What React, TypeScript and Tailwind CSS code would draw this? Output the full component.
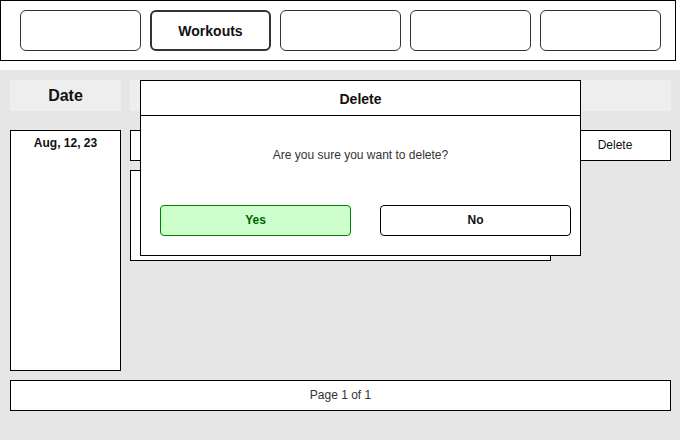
import React from "react";

export default function App() {
  const navItems = ["", "Workouts", "", "", ""];
  return (
    <div
      className="relative w-[681px] h-[441px] bg-white overflow-hidden"
      style={{ fontFamily: '"Liberation Sans", Arial, sans-serif' }}
    >
      {/* Top navigation */}
      <div className="flex items-start gap-[9px] w-[676px] h-[61px] border border-black pl-[19px] pt-[9px]">
        {navItems.map((label, i) => (
          <div
            key={i}
            className={
              label
                ? "w-[121px] h-[41px] rounded-[6px] border-2 border-[#333] flex items-center justify-center pt-[2px] text-[14px] font-bold text-[#111]"
                : "w-[121px] h-[41px] rounded-[6px] border border-[#333] flex items-center justify-center"
            }
          >
            {label}
          </div>
        ))}
      </div>

      {/* Gray content area */}
      <div className="mt-[9px] w-[680px] h-[370px] bg-[#e6e6e6] pt-[10px] pl-[10px] flex flex-col">
        {/* Headers */}
        <div className="flex gap-[9px] h-[31px]">
          <div className="w-[111px] h-[31px] bg-[#eeeeee] flex items-center justify-center text-[16px] font-bold text-[#111]">
            Date
          </div>
          <div className="w-[541px] h-[31px] bg-[#eeeeee]" />
        </div>

        {/* Body */}
        <div className="flex gap-[9px] mt-[19px]">
          <div className="w-[111px] h-[241px] bg-white border border-black flex justify-center pt-[3px] text-[12px] font-bold text-[#111]">
            Aug, 12, 23
          </div>
          <div className="flex flex-col gap-[9px]">
            <div className="w-[541px] h-[31px] bg-white border border-black flex">
              <div className="flex-1" />
              <div className="w-[90px] pr-[20px] pb-[2px] flex items-center justify-center text-[12px] text-[#111]">
                Delete
              </div>
            </div>
            <div className="w-[421px] h-[91px] bg-white border border-black" />
          </div>
        </div>

        {/* Footer */}
        <div className="mt-[9px] w-[661px] h-[31px] bg-white border border-black flex items-center justify-center pb-[2px] text-[12px] text-[#333]">
          Page 1 of 1
        </div>
      </div>

      {/* Delete dialog overlay */}
      <div className="absolute left-[140px] top-[80px] w-[441px] h-[176px] bg-white border border-black flex flex-col">
        <div className="h-[35px] border-b border-black flex items-center justify-center pt-[2px] text-[14px] font-bold text-[#111]">
          Delete
        </div>
        <div className="h-[80px] flex items-center justify-center text-[12px] text-[#333] pb-[3px]">
          Are you sure you want to delete?
        </div>
        <div className="flex gap-[29px] pl-[19px] pt-[9px]">
          <div className="w-[191px] h-[31px] rounded-[4px] border border-[#008000] bg-[#ccffcc] flex items-center justify-center pb-[2px] text-[12px] font-bold text-[#006600]">
            Yes
          </div>
          <div className="w-[191px] h-[31px] rounded-[4px] border border-black bg-white flex items-center justify-center pb-[2px] text-[12px] font-bold text-[#111]">
            No
          </div>
        </div>
      </div>
    </div>
  );
}
